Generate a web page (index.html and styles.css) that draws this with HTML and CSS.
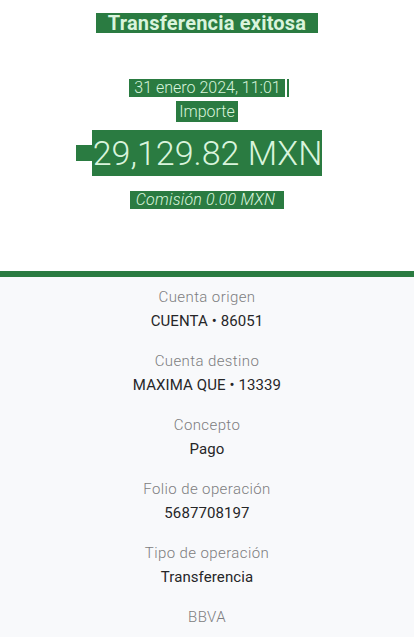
FILE: index.html
```html
<!DOCTYPE html>
<html lang="es">
<head>
    <meta charset="UTF-8">
    <title>Transferencia exitosa</title>
    <meta name="viewport" content="width=device-width, initial-scale=1.0">
    <link rel="stylesheet" href="styles.css">
</head>
<body>
    <div class="hero">
        <span class="tag tag-title">Transferencia exitosa</span>
        <span class="tag tag-date">31 enero 2024, 11:01</span>
        <span class="tag tag-label">Importe</span>
        <div class="amount-row">
            <span class="tag tag-minus"></span>
            <span class="tag tag-amount">29,129.82 MXN</span>
        </div>
        <span class="tag tag-fee">Comisión 0.00 MXN</span>
    </div>

    <div class="rule"></div>

    <div class="details">
        <div class="detail">
            <div class="detail-label">Cuenta origen</div>
            <div class="detail-value">CUENTA • 86051</div>
        </div>
        <div class="detail">
            <div class="detail-label">Cuenta destino</div>
            <div class="detail-value">MAXIMA QUE • 13339</div>
        </div>
        <div class="detail">
            <div class="detail-label">Concepto</div>
            <div class="detail-value">Pago</div>
        </div>
        <div class="detail">
            <div class="detail-label">Folio de operación</div>
            <div class="detail-value">5687708197</div>
        </div>
        <div class="detail">
            <div class="detail-label">Tipo de operación</div>
            <div class="detail-value">Transferencia</div>
        </div>
        <div class="detail">
            <div class="detail-label">BBVA</div>
        </div>
    </div>
</body>
</html>
```

FILE: styles.css
```css
* {
    margin: 0;
    padding: 0;
    box-sizing: border-box;
}

body {
    background: #ffffff;
    font-family: Roboto, "Liberation Sans", sans-serif;
    height: 637px;
    overflow: hidden;
}

.hero {
    display: flex;
    flex-direction: column;
    align-items: center;
    height: 271px;
    padding-top: 13px;
    background: #ffffff;
}

.tag {
    display: inline-block;
    background: #2a7b41;
    color: #d9f4dc;
    white-space: nowrap;
}

.tag-title {
    font-size: 20px;
    font-weight: 700;
    line-height: 20px;
    padding: 0 12px 0 12px;
    letter-spacing: 0.2px;
}

.tag-date {
    margin-top: 46px;
    font-size: 16px;
    font-weight: 300;
    line-height: 18px;
    padding: 0 4px 0 5px;
    box-shadow: 2px 0 0 #ffffff, 4px 0 0 #2a7b41;
}

.tag-label {
    margin-top: 4px;
    font-size: 16px;
    font-weight: 300;
    line-height: 21px;
    padding: 0 3px;
}

.amount-row {
    display: flex;
    align-items: center;
    margin-top: 8px;
    margin-left: -16px;
}

.tag-minus {
    width: 16px;
    height: 16px;
}

.tag-amount {
    font-size: 34px;
    font-weight: 300;
    line-height: 46px;
    padding: 0 0 0 1px;
}

.tag-fee {
    margin-top: 15px;
    font-size: 16px;
    font-weight: 300;
    font-style: italic;
    line-height: 18px;
    padding: 0 9px 0 6px;
    letter-spacing: 0.2px;
}

.rule {
    height: 6px;
    background: #2a7b41;
}

.details {
    background: #f8f9fb;
    padding-top: 10px;
    height: 360px;
}

.detail {
    display: flex;
    flex-direction: column;
    align-items: center;
    gap: 4px;
    margin-bottom: 20px;
}

.detail-label {
    font-size: 15px;
    font-weight: 300;
    line-height: 20px;
    letter-spacing: 0.4px;
    color: #7d7d80;
}

.detail-value {
    font-size: 15px;
    font-weight: 400;
    line-height: 20px;
    letter-spacing: 0.1px;
    color: #262628;
}
```
